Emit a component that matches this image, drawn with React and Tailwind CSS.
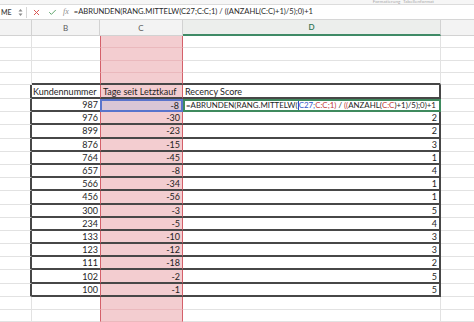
import React from "react";
import { X, Check } from "lucide-react";

const data = [
  [987, -8, null],
  [976, -30, 2],
  [899, -23, 2],
  [876, -15, 3],
  [764, -45, 1],
  [657, -8, 4],
  [566, -34, 1],
  [456, -56, 1],
  [300, -3, 5],
  [234, -5, 4],
  [133, -10, 3],
  [123, -12, 3],
  [111, -18, 2],
  [102, -2, 5],
  [100, -1, 5],
];

// empty sheet row (outside the table)
const GridRow = ({ h, tableTop }) => (
  <div className={`flex ${h}`}>
    <div className="w-[32px] shrink-0 border-r border-b border-[#e2e2e2]" />
    <div className={`w-[68px] shrink-0 ${tableTop ? "border-b-2 border-[#474747]" : "border-b border-[#e2e2e2]"}`} />
    <div className={`w-[83px] shrink-0 bg-[#f3cdd0] border-x border-x-[#d4606a] ${tableTop ? "border-b-2 border-b-[#474747]" : "border-b border-b-[#eab9bd]"}`} />
    <div className={`w-[258px] shrink-0 border-r ${tableTop ? "border-b-2 border-b-[#474747] border-r-[#e2e2e2]" : "border-b border-[#e2e2e2]"}`} />
    <div className="flex-1 border-b border-[#e2e2e2]" />
  </div>
);

const Formula = () => (
  <span className="flex items-center whitespace-nowrap">
    =ABRUNDEN(RANG.MITTELW(
    <span className="inline-block w-px h-[9px] bg-[#2d4fc4]" />
    <span className="text-[#3557c8]">C27;</span>
    <span className="text-[#c23a3a]">C:C;1)</span>
    &nbsp;/&nbsp;
    <span className="text-[#c23a3a]">((</span>ANZAHL(
    <span className="text-[#c23a3a]">C:C</span>)+1)/5);0)+1
  </span>
);

export default function App() {
  return (
    <div className="w-[474px] h-[322px] overflow-hidden bg-white text-[#1e1e1e] font-['Lato','Liberation_Sans',sans-serif]">
      {/* ribbon remainder */}
      <div className="h-[5px] bg-[#f6f6f6] border-b border-[#dcdcdc] flex items-center justify-end pr-[40px]">
        <span className="text-[4.5px] leading-none text-[#a9a9a9] tracking-wide">Formatierung&nbsp;&nbsp;Tabellenformat</span>
      </div>

      {/* formula bar */}
      <div className="h-[15px] flex items-center border-b border-[#d6d6d6] bg-white">
        <span className="text-[7px] font-semibold text-[#444] w-[17px] pl-[1px]">ME</span>
        <svg width="5" height="9" viewBox="0 0 5 9" className="ml-[1px]">
          <path d="M0.5 3.5 L2.5 1 L4.5 3.5 Z" fill="#8a8a8a" />
          <path d="M0.5 5.5 L2.5 8 L4.5 5.5 Z" fill="#8a8a8a" />
        </svg>
        <div className="w-px h-[11px] ml-[3px] bg-[#d6d6d6]" />
        <X size={9} strokeWidth={2.6} className="ml-[5px] text-[#d9534f]" />
        <Check size={9} strokeWidth={2.6} className="ml-[7px] text-[#5aa469]" />
        <span className="ml-[6px] text-[8px] italic font-['Liberation_Serif',serif] text-[#8b8b8b]">fx</span>
        <span className="ml-[5px] text-[7.6px] text-[#2a2a2a] whitespace-nowrap">
          =ABRUNDEN(RANG.MITTELW(C27;C:C;1) / ((ANZAHL(C:C)+1)/5);0)+1
        </span>
      </div>

      {/* column headers */}
      <div className="flex h-[16px] bg-[#f3f3f3] text-[8px] text-[#5b5b5b]">
        <div className="w-[32px] shrink-0 border-r border-b border-[#d2d2d2]" />
        <div className="w-[68px] shrink-0 border-r border-b border-[#d2d2d2] flex items-center justify-center">B</div>
        <div className="w-[83px] shrink-0 border-r border-b border-[#d2d2d2] flex items-center justify-center">C</div>
        <div className="w-[258px] shrink-0 border-r border-[#d2d2d2] border-b-2 border-b-[#3f8a66] bg-[#eceeec] flex items-center justify-center text-[#2f7352] font-semibold">D</div>
        <div className="flex-1 border-b border-[#d2d2d2]" />
      </div>

      {/* sheet */}
      <div className="text-[9px] leading-none">
        <GridRow h="h-[12px]" />
        <GridRow h="h-[13px]" />
        <GridRow h="h-[12px]" />
        <GridRow h="h-[12px]" tableTop />

        {/* table header */}
        <div className="flex h-[14px]">
          <div className="w-[32px] shrink-0 border-r-2 border-r-[#474747] border-b border-[#e2e2e2]" />
          <div className="w-[68px] shrink-0 border-b-2 border-[#474747] flex items-center pl-[1px]">Kundennummer</div>
          <div className="w-[83px] shrink-0 bg-[#f3cdd0] border-x border-x-[#d4606a] border-b-2 border-b-[#474747] flex items-center pl-[2px]">Tage seit Letztkauf</div>
          <div className="w-[258px] shrink-0 border-r-2 border-r-[#474747] border-b-2 border-b-[#474747] flex items-center pl-[2px]">Recency Score</div>
          <div className="flex-1 border-b border-[#e2e2e2]" />
        </div>

        {data.map(([id, days, score], i) => {
          const active = i === 0;
          return (
            <div key={i} className="flex h-[13.2px]">
              <div className="w-[32px] shrink-0 border-r-2 border-r-[#474747] border-b border-[#e2e2e2]" />
              <div className="w-[68px] shrink-0 border-b-2 border-[#474747] flex items-center justify-end pr-[2px]">{id}</div>
              <div
                className={`w-[83px] shrink-0 flex items-center justify-end pr-[2px] ${
                  active
                    ? "bg-[#d9c6d6] border-2 border-[#5a74cc]"
                    : "bg-[#f3cdd0] border-x border-x-[#d4606a] border-b-2 border-b-[#474747]"
                }`}
              >
                {days}
              </div>
              <div
                className={`w-[258px] shrink-0 flex items-center ${
                  active
                    ? "border-2 border-[#3f8a5e] pl-[1px] text-[7.9px]"
                    : "border-r-2 border-r-[#474747] border-b-2 border-b-[#474747] justify-end pr-[2px]"
                }`}
              >
                {active ? <Formula /> : score}
              </div>
              <div className="flex-1 border-b border-[#e2e2e2]" />
            </div>
          );
        })}

        <GridRow h="h-[13px]" />
        <GridRow h="h-[12px]" />
      </div>
    </div>
  );
}
